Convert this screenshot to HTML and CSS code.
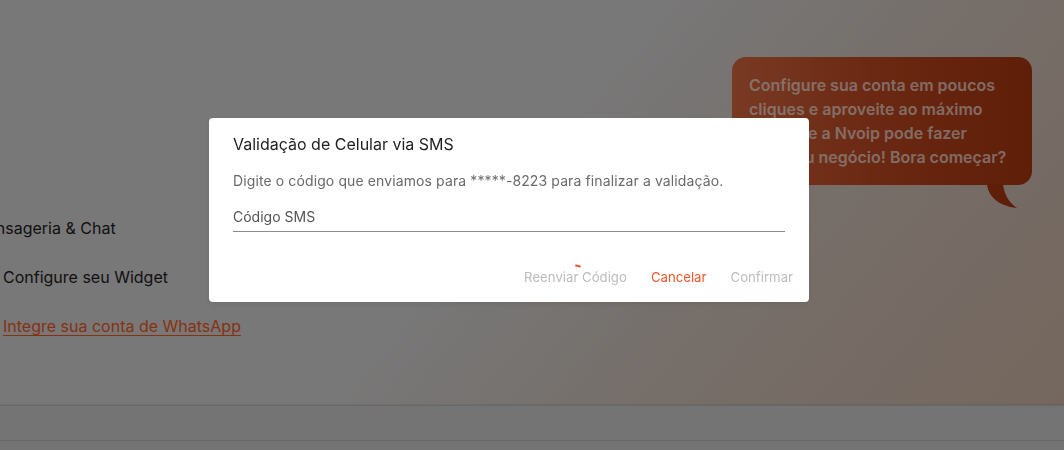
FILE: index.html
```html
<!DOCTYPE html>
<html lang="pt-BR">
<head>
<meta charset="utf-8">
<title>Validação de Celular via SMS</title>
<link rel="stylesheet" href="styles.css">
</head>
<body>
<div class="page">
  <section class="hero">
    <div class="steps">
      <h3 class="steps-title">Mensageria &amp; Chat</h3>
      <ul class="steps-list">
        <li class="step">Configure seu Widget</li>
        <li class="step"><a class="step-link" href="#">Integre sua conta de WhatsApp</a></li>
      </ul>
    </div>
    <div class="bubble">
      <p class="bubble-text">Configure sua conta em poucos<br>cliques e aproveite ao máximo<br>tudo que a Nvoip pode fazer<br>pelo seu negócio! Bora começar?</p>
      <svg class="bubble-tail" width="32" height="26" viewBox="0 0 32 26"><path d="M0 0 C1 12 11 22 30 24 C21 18 17 9 16 0 Z" fill="#ad3810"/></svg>
    </div>
  </section>
  <div class="band"></div>
  <div class="rest"></div>
</div>

<div class="overlay">
  <div class="dialog" role="dialog">
    <h2 class="dialog-title">Validação de Celular via SMS</h2>
    <p class="dialog-text">Digite o código que enviamos para *****-8223 para finalizar a validação.</p>
    <label class="field">
      <span class="field-label">Código SMS</span>
    </label>
    <div class="actions">
      <button class="btn btn-disabled btn-resend">Reenviar Código<span class="tick"></span></button>
      <button class="btn btn-primary">Cancelar</button>
      <button class="btn btn-disabled">Confirmar</button>
    </div>
  </div>
</div>
</body>
</html>
```

FILE: styles.css
```css
* { box-sizing: border-box; }

html, body {
  margin: 0;
  padding: 0;
  height: 100%;
}

body {
  font-family: Inter, "Noto Sans", "Liberation Sans", sans-serif;
  background: #d6d6d6;
  overflow: hidden;
}

.page {
  display: flex;
  flex-direction: column;
  height: 100%;
}

.hero {
  height: 405px;
  flex: none;
  display: flex;
  justify-content: space-between;
  align-items: flex-start;
  background: linear-gradient(130deg, #dadada 0%, #dadada 48%, #d7c9c0 70%, #d6bcab 100%);
}

.steps {
  margin-left: -24px;
  padding-top: 216px;
}

.steps-title {
  margin: 0 0 0 -4px;
  font-size: 16px;
  font-weight: 400;
  line-height: 24px;
  color: #222;
}

.steps-list {
  list-style: none;
  margin: 0;
  padding: 0 0 0 27px;
}

.step {
  margin-top: 25px;
  font-size: 16px;
  line-height: 24px;
  color: #222;
}

.step-link {
  color: #f55a22;
  text-decoration: underline;
  text-underline-offset: 3px;
}

.bubble {
  position: relative;
  width: 300px;
  margin: 57px 32px 0 0;
  padding: 16px 17px;
  border-radius: 14px;
  background: linear-gradient(90deg, #dc6a40 0%, #c24820 50%, #ad3810 100%);
}

.bubble-text {
  margin: 0;
  font-size: 16px;
  font-weight: 600;
  line-height: 24px;
  color: rgba(255, 245, 240, 0.74);
}

.bubble-tail {
  position: absolute;
  left: 255px;
  top: 100%;
  margin-top: -1px;
  display: block;
}

.band {
  height: 36px;
  flex: none;
  border-top: 1px solid #bdbdbd;
  border-bottom: 1px solid #bdbdbd;
  box-shadow: 0 -1px 1px rgba(0,0,0,0.06);
  background: #d3d3d3;
}

.rest {
  flex: 1;
  background: #d3d3d3;
}

.overlay {
  position: fixed;
  inset: 0;
  background: rgba(0, 0, 0, 0.45);
  display: flex;
  align-items: flex-start;
  padding: 118px 0 0 209px;
}

.dialog {
  width: 600px;
  background: #fff;
  border-radius: 4px;
  padding: 14px 24px 15px;
  box-shadow: 0 2px 6px rgba(0,0,0,.08);
}

.dialog-title {
  margin: 0;
  font-size: 16px;
  font-weight: 400;
  line-height: 24px;
  color: #1f1f1f;
}

.dialog-text {
  margin: 15px 0 0;
  font-size: 14px;
  letter-spacing: 0.11px;
  line-height: 20px;
  color: #6a6a6a;
}

.field {
  display: block;
  margin-top: 15px;
  padding-top: 1px;
  padding-bottom: 4px;
  border-bottom: 1px solid #8c8c8c;
}

.field-label {
  display: block;
  font-size: 14px;
  line-height: 20px;
  color: #555;
}

.actions {
  display: flex;
  justify-content: flex-end;
  gap: 8px;
  margin: 35px -16px 0 0;
}

.btn {
  position: relative;
  border: 0;
  background: none;
  padding: 0 8px;
  font-family: inherit;
  font-size: 13.2px;
  line-height: 20px;
  cursor: pointer;
}

.btn-disabled {
  color: #bcbcbc;
}

.btn-primary {
  color: #f0582a;
}

.tick {
  position: absolute;
  left: 59px;
  top: -2px;
  width: 6px;
  height: 2px;
  border-radius: 1px;
  background: #f0582a;
  transform: rotate(15deg);
}
```
